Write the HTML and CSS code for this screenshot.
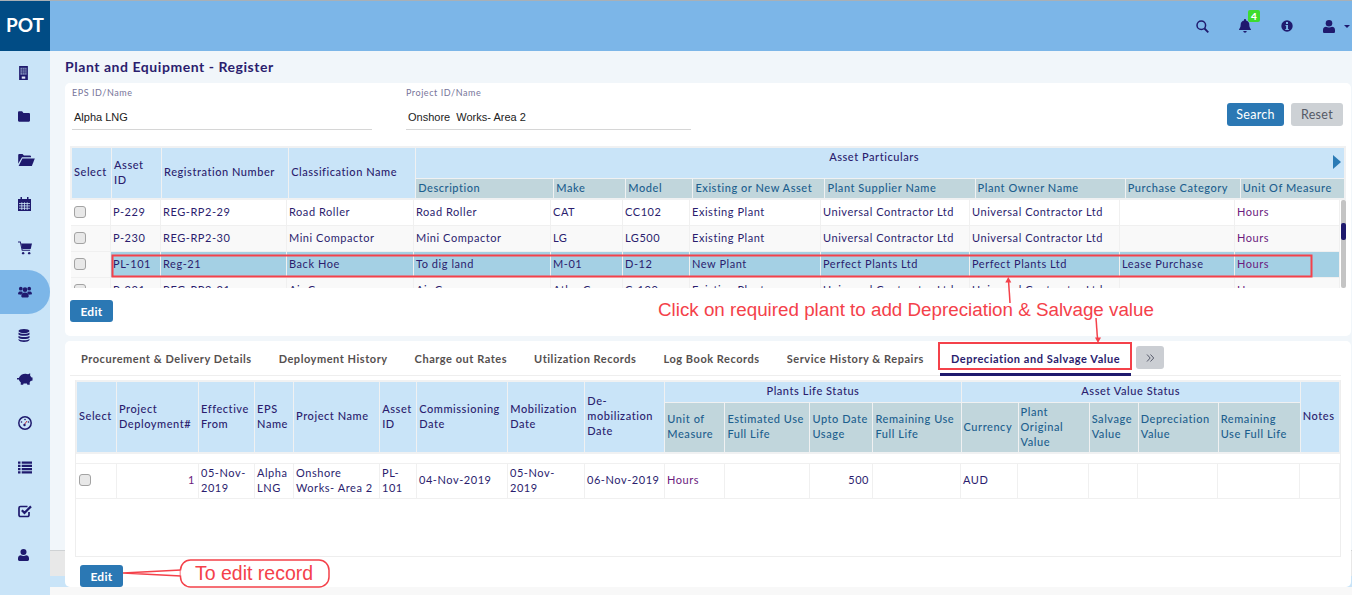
FILE: index.html
```html
<!DOCTYPE html>
<html lang="en">
    <head>
        <title>Plant and Equipment - Register</title>
        <meta name="viewport" content="width=device-width, initial-scale=1">
        <link rel="stylesheet" href="styles.css">
    </head>
    <body>
        <svg class="sprite" xmlns="http://www.w3.org/2000/svg">
            <symbol id="i-building" viewBox="0 0 12 16"><rect x="1" y="0" width="10" height="16" fill="#1f1a6e"/><path d="M2.5 2h7v8h-7z" fill="#7d8bb8"/><path d="M2.5 4.5h7M2.5 7h7M5 2v8M7.5 2v8" stroke="#1f1a6e" stroke-width=".6"/><rect x="4" y="12" width="4" height="2.5" fill="#dfe8f6"/></symbol>
            <symbol id="i-folder" viewBox="0 0 14 12"><path d="M1.200 0h3.600l1.500 1.800h6.500a1.200 1.200 0 0 1 1.200 1.200v7.800a1.200 1.200 0 0 1-1.200 1.200h-11.600a1.200 1.200 0 0 1-1.200-1.200v-9.600a1.200 1.200 0 0 1 1.200-1.200z" fill="#1f1a6e"/></symbol>
            <symbol id="i-open" viewBox="0 0 18 13"><path d="M0 10.500v-9.300a1.200 1.200 0 0 1 1.200-1.200h3.500l1.500 1.500h6.500a1.200 1.200 0 0 1 1.200 1.200v.8h-9.800z" fill="#1f1a6e"/><path d="M4.500 4.800h13.500l-3.200 8.200h-14.300z" fill="#1f1a6e"/></symbol>
            <symbol id="i-calendar" viewBox="0 0 13 14"><path d="M0 2h13v12h-13z" fill="#1f1a6e"/><path d="M2.500 0h1.500v2.500h-1.500zM9 0h1.500v2.500h-1.500z" fill="#1f1a6e"/><path d="M1 6.500h11M1 8.900h11M1 11.300h11M3.800 5.300v7.700M6.500 5.300v7.700M9.200 5.300v7.700" stroke="#c9e4f8" stroke-width=".8"/></symbol>
            <symbol id="i-cart" viewBox="0 0 15 14"><path d="M0 .5h2.500l2 9h8.500" fill="none" stroke="#1f1a6e" stroke-width="1.100"/><path d="M3.300 2.200h11.700l-1.400 5.800h-9z" fill="#1f1a6e"/><circle cx="5.500" cy="12.500" r="1.300" fill="#1f1a6e"/><circle cx="12" cy="12.500" r="1.300" fill="#1f1a6e"/></symbol>
            <symbol id="i-users" viewBox="0 0 15 12"><circle cx="3" cy="2.500" r="2" fill="#1f1a6e"/><circle cx="12" cy="2.500" r="2" fill="#1f1a6e"/><circle cx="7.500" cy="3.500" r="2.500" fill="#1f1a6e"/><path d="M0 8.500c0-2.500 1-3 3-3s2 .5 2 1l-1.500 2.500zM15 8.500c0-2.500-1-3-3-3s-2 .5-2 1l1.500 2.500z" fill="#1f1a6e"/><path d="M3.500 10.500c0-3 1.500-4 4-4s4 1 4 4c0 1-1 1.500-1.500 1.500h-5c-.5 0-1.500-.5-1.500-1.500z" fill="#1f1a6e"/></symbol>
            <symbol id="i-database" viewBox="0 0 12 13"><ellipse cx="6" cy="2" rx="5.500" ry="2" fill="#1f1a6e"/><path d="M.5 3.500c1 1.700 10 1.700 11 0v2c-1 1.700-10 1.700-11 0zM.5 6.700c1 1.700 10 1.700 11 0v2c-1 1.700-10 1.700-11 0zM.5 9.900c1 1.700 10 1.700 11 0v1.100c-1 2.600-10 2.600-11 0z" fill="#1f1a6e"/></symbol>
            <symbol id="i-piggy" viewBox="0 0 17 12"><path d="M0 5h2c1-3 4-4.500 7-4.500 1 0 2 .2 2.800.5l2.200-1v2.500l1.500 2h1v3l-2 .5-1 1.500v2.500h-2.500l-.5-1.200h-3.500l-.5 1.200h-2.500v-2.500c-1-.7-1.800-2-2-3h-2z" fill="#1f1a6e"/></symbol>
            <symbol id="i-gauge" viewBox="0 0 14 14"><circle cx="7" cy="7" r="6.200" fill="none" stroke="#1f1a6e" stroke-width="1.500"/><circle cx="7" cy="3.500" r=".8" fill="#1f1a6e"/><circle cx="3.500" cy="6" r=".8" fill="#1f1a6e"/><circle cx="10.500" cy="6" r=".8" fill="#1f1a6e"/><path d="M6 9l3-4" stroke="#c0303a" stroke-width="1"/><circle cx="6.500" cy="9" r="1.200" fill="#1f1a6e"/></symbol>
            <symbol id="i-list" viewBox="0 0 14 12"><path d="M0 0h2.500v2.300h-2.500zM0 3.200h2.500v2.300h-2.500zM0 6.500h2.500v2.300h-2.500zM0 9.700h2.500v2.300h-2.500zM3.700 0h10.300v2.300h-10.300zM3.700 3.200h10.300v2.300h-10.300zM3.700 6.500h10.300v2.300h-10.300zM3.700 9.700h10.300v2.300h-10.300z" fill="#1f1a6e"/></symbol>
            <symbol id="i-check" viewBox="0 0 14 14"><path d="M11 8v3a1.500 1.500 0 0 1-1.500 1.500h-7a1.500 1.500 0 0 1-1.500-1.500v-7a1.500 1.500 0 0 1 1.500-1.500h7" fill="none" stroke="#1f1a6e" stroke-width="1.700"/><path d="M3.800 6.200l2.700 2.700 6.500-6.500" fill="none" stroke="#1f1a6e" stroke-width="2.200"/></symbol>
            <symbol id="i-user" viewBox="0 0 12 13"><circle cx="6" cy="3.300" r="3.300" fill="#1f1a6e"/><path d="M0 11.500v-1.500c0-2 1.500-3.200 3-3.200 1 .5 2 .7 3 .7s2-.2 3-.7c1.500 0 3 1.200 3 3.200v1.500c0 1-.6 1.500-1.500 1.500h-9c-.9 0-1.500-.5-1.500-1.500z" fill="#1f1a6e"/></symbol>
        </svg>

        <div class="shell">
            <aside class="sidebar">
                <div class="logo">POT</div>
                <nav class="side-nav">
                    <a class="side-item"><svg width="11" height="14"><use href="#i-building"/></svg></a>
                    <a class="side-item"><svg width="12" height="11"><use href="#i-folder"/></svg></a>
                    <a class="side-item"><svg width="17" height="12"><use href="#i-open"/></svg></a>
                    <a class="side-item"><svg width="13" height="14"><use href="#i-calendar"/></svg></a>
                    <a class="side-item"><svg width="14" height="14"><use href="#i-cart"/></svg></a>
                    <a class="side-item active"><svg width="14" height="12"><use href="#i-users"/></svg></a>
                    <a class="side-item"><svg width="12" height="13"><use href="#i-database"/></svg></a>
                    <a class="side-item piggy"><svg width="16" height="12"><use href="#i-piggy"/></svg></a>
                    <a class="side-item"><svg width="14" height="14"><use href="#i-gauge"/></svg></a>
                    <a class="side-item"><svg width="14" height="13"><use href="#i-list"/></svg></a>
                    <a class="side-item"><svg width="14" height="14"><use href="#i-check"/></svg></a>
                    <a class="side-item"><svg width="11" height="12"><use href="#i-user"/></svg></a>
                </nav>
            </aside>

            <div class="page">
                <header class="topbar">
                    <a class="top-icon"><svg width="13" height="13" viewBox="0 0 13 13"><circle cx="5.300" cy="5.300" r="4.300" fill="none" stroke="#1f1a6e" stroke-width="1.500"/><path d="M8.500 8.500l3.800 3.800" stroke="#1f1a6e" stroke-width="1.800"/></svg></a>
                    <a class="top-icon bell"><svg width="12" height="14" viewBox="0 0 12 14"><path d="M6 0c.6 0 1 .4 1 1v.6c2 .4 3.300 2 3.300 4 0 3.400 1.700 4.400 1.700 5.400h-12c0-1 1.700-2 1.700-5.400 0-2 1.300-3.600 3.300-4v-.6c0-.6.400-1 1-1z" fill="#1f1a6e"/><path d="M4.300 12h3.400c0 1-.8 1.700-1.700 1.700s-1.700-.7-1.700-1.700z" fill="#1f1a6e"/></svg><span class="badge">4</span></a>
                    <a class="top-icon"><svg width="12" height="12" viewBox="0 0 12 12"><circle cx="6" cy="6" r="5.700" fill="#1f1a6e"/><rect x="5" y="2" width="2" height="2" fill="#7cb6e8"/><path d="M4.500 5h2.500v4h.8v1h-3.500v-1h.8v-3h-.6z" fill="#7cb6e8"/></svg></a>
                    <a class="top-icon user"><svg width="12" height="13"><use href="#i-user"/></svg><span class="caret"></span></a>
                </header>

                <main class="content">
                    <h1 class="page-title">Plant and Equipment - Register</h1>

                    <section class="card register">
                        <div class="filters">
                            <div class="field eps">
                                <label>EPS ID/Name</label>
                                <div class="field-value">Alpha LNG</div>
                            </div>
                            <div class="field project">
                                <label>Project ID/Name</label>
                                <div class="field-value">Onshore&nbsp; Works- Area 2</div>
                            </div>
                            <div class="filter-actions">
                                <button class="btn primary">Search</button>
                                <button class="btn muted">Reset</button>
                            </div>
                        </div>

                        <div class="grid-head">
                            <table class="head-table reg-head">
                                <colgroup>
                                    <col style="width:39px"><col style="width:49px"><col style="width:126px"><col style="width:126px"><col style="width:137px"><col style="width:71px"><col style="width:66px"><col style="width:131px"><col style="width:149px"><col style="width:149px"><col style="width:114px"><col style="width:103px">
                                </colgroup>
                                <tr>
                                    <th rowspan="2">Select</th>
                                    <th rowspan="2">Asset<br>ID</th>
                                    <th rowspan="2">Registration Number</th>
                                    <th rowspan="2">Classification Name</th>
                                    <th colspan="8" class="group upper">Asset Particulars<span class="scroll-arrow"></span></th>
                                </tr>
                                <tr class="sub">
                                    <th>Description</th><th>Make</th><th>Model</th><th>Existing or New Asset</th><th>Plant Supplier Name</th><th>Plant Owner Name</th><th>Purchase Category</th><th>Unit Of Measure</th>
                                </tr>
                            </table>
                        </div>

                        <div class="grid-scroll">
                            <div class="grid-clip">
                                <table class="body-table reg-body">
                                    <colgroup>
                                        <col style="width:40px"><col style="width:50px"><col style="width:126px"><col style="width:127px"><col style="width:137px"><col style="width:72px"><col style="width:67px"><col style="width:131px"><col style="width:149px"><col style="width:150px"><col style="width:115px"><col style="width:105px">
                                    </colgroup>
                                    <tr>
                                        <td><input type="checkbox" class="check"></td><td>P-229</td><td>REG-RP2-29</td><td>Road Roller</td><td>Road Roller</td><td>CAT</td><td>CC102</td><td>Existing Plant</td><td>Universal Contractor Ltd</td><td>Universal Contractor Ltd</td><td></td><td class="unit">Hours</td>
                                    </tr>
                                    <tr>
                                        <td><input type="checkbox" class="check"></td><td>P-230</td><td>REG-RP2-30</td><td>Mini Compactor</td><td>Mini Compactor</td><td>LG</td><td>LG500</td><td>Existing Plant</td><td>Universal Contractor Ltd</td><td>Universal Contractor Ltd</td><td></td><td class="unit">Hours</td>
                                    </tr>
                                    <tr class="picked">
                                        <td><input type="checkbox" class="check"></td><td>PL-101</td><td>Reg-21</td><td>Back Hoe</td><td>To dig land</td><td>M-01</td><td>D-12</td><td>New Plant</td><td>Perfect Plants Ltd</td><td>Perfect Plants Ltd</td><td>Lease Purchase</td><td class="unit">Hours</td>
                                    </tr>
                                    <tr>
                                        <td><input type="checkbox" class="check"></td><td>P-231</td><td>REG-RP2-31</td><td>Air Compressor</td><td>Air Compressor</td><td>Atlas Copco</td><td>C-100</td><td>Existing Plant</td><td>Universal Contractor Ltd</td><td>Universal Contractor Ltd</td><td></td><td class="unit">Hours</td>
                                    </tr>
                                </table>
                            </div>
                            <div class="scrollbar"><div class="scroll-thumb"></div></div>
                        </div>

                        <button class="btn primary edit">Edit</button>
                    </section>

                    <section class="card detail">
                        <div class="tabs">
                            <a class="tab">Procurement &amp; Delivery Details</a>
                            <a class="tab">Deployment History</a>
                            <a class="tab">Charge out Rates</a>
                            <a class="tab">Utilization Records</a>
                            <a class="tab">Log Book Records</a>
                            <a class="tab">Service History &amp; Repairs</a>
                            <a class="tab active">Depreciation and Salvage Value</a>
                            <button class="tab-more"><svg width="9" height="8" viewBox="0 0 9 8"><path d="M1 .5l3.200 3.500-3.200 3.500M4.500 .5l3.200 3.500-3.200 3.500" fill="none" stroke="#55596a" stroke-width="1"/></svg></button>
                        </div>

                        <div class="detail-frame">
                            <div class="grid-head dep-wrap">
                                <table class="head-table dep-head">
                                    <colgroup>
                                        <col style="width:39px"><col style="width:81px"><col style="width:55px"><col style="width:38px"><col style="width:85px"><col style="width:36px"><col style="width:90px"><col style="width:76px"><col style="width:79px"><col style="width:59px"><col style="width:84px"><col style="width:62px"><col style="width:87px"><col style="width:56px"><col style="width:70px"><col style="width:48px"><col style="width:79px"><col style="width:81px"><col style="width:38px">
                                    </colgroup>
                                    <tr>
                                        <th rowspan="2">Select</th>
                                        <th rowspan="2">Project Deployment#</th>
                                        <th rowspan="2">Effective From</th>
                                        <th rowspan="2">EPS Name</th>
                                        <th rowspan="2">Project Name</th>
                                        <th rowspan="2">Asset ID</th>
                                        <th rowspan="2">Commissioning Date</th>
                                        <th rowspan="2">Mobilization Date</th>
                                        <th rowspan="2">De-mobilization Date</th>
                                        <th colspan="4" class="group">Plants Life Status</th>
                                        <th colspan="5" class="group">Asset Value Status</th>
                                        <th rowspan="2" class="notes">Notes</th>
                                    </tr>
                                    <tr class="sub">
                                        <th>Unit of Measure</th><th>Estimated Use Full Life</th><th>Upto Date Usage</th><th>Remaining Use Full Life</th><th>Currency</th><th>Plant Original Value</th><th>Salvage Value</th><th>Depreciation Value</th><th>Remaining Use Full Life</th>
                                    </tr>
                                </table>
                            </div>
                            <table class="body-table dep-body">
                                <colgroup>
                                    <col style="width:41px"><col style="width:82px"><col style="width:56px"><col style="width:39px"><col style="width:86px"><col style="width:37px"><col style="width:91px"><col style="width:77px"><col style="width:80px"><col style="width:60px"><col style="width:85px"><col style="width:63px"><col style="width:88px"><col style="width:57px"><col style="width:71px"><col style="width:49px"><col style="width:80px"><col style="width:82px"><col style="width:40px">
                                </colgroup>
                                <tr>
                                    <td><input type="checkbox" class="check"></td><td class="num unit">1</td><td>05-Nov-2019</td><td>Alpha LNG</td><td>Onshore Works- Area 2</td><td>PL-101</td><td>04-Nov-2019</td><td>05-Nov-<br>2019</td><td>06-Nov-2019</td><td class="unit">Hours</td><td></td><td class="num">500</td><td></td><td>AUD</td><td></td><td></td><td></td><td></td><td></td>
                                </tr>
                            </table>
                        </div>

                        <button class="btn primary edit">Edit</button>
                    </section>
                </main>
                <div class="page-foot"></div>
            </div>
        </div>

        <!-- tutorial markup drawn over the screenshot -->
        <svg class="markup" width="1352" height="595" viewBox="0 0 1352 595" xmlns="http://www.w3.org/2000/svg">
            <rect x="112.500" y="255.500" width="1199" height="21" fill="none" stroke="#f4414a" stroke-width="2"/>
            <rect x="939" y="343" width="192" height="26" fill="none" stroke="#f4414a" stroke-width="2"/>
            <path d="M1010 303l-1.500-23" stroke="#f4414a" stroke-width="1.500" fill="none"/>
            <path d="M1008.300 277l-3 5.500h6z" fill="#f4414a"/>
            <path d="M1096 318l1.500 21" stroke="#f4414a" stroke-width="1.500" fill="none"/>
            <path d="M1098 343l3-5.500h-6z" fill="#f4414a"/>
            <path d="M181 570l-58 3 58 3" fill="#fff" stroke="#f4414a" stroke-width="1.500"/>
            <rect x="180.500" y="560" width="148.500" height="27" rx="10" fill="#fff" stroke="#f4414a" stroke-width="1.500"/>
            <path d="M181.500 570.500v5" stroke="#fff" stroke-width="2"/>
        </svg>
        <div class="note note-plant">Click on required plant to add Depreciation &amp; Salvage value</div>
        <div class="note note-edit">To edit record</div>
    </body>
</html>
```

FILE: styles.css
```css
:root {
    --navy: #1f1a6e;
    --text: #2b1d6e;
    --purple: #6b1a7e;
    --blue-head: #c9e4f8;
    --blue-sub: #c1d6dc;
    --blue-sub-text: #1d5f8e;
    --blue-top: #7cb6e8;
    --blue-logo: #014c85;
    --picked: #a4d0e4;
    --line: #f0f0f0;
    --red: #f4414a;
}
* { box-sizing: border-box; }
html, body { margin: 0; height: 100%; overflow: hidden; }
body { font-family: Lato, "Open Sans", sans-serif; font-size: 11px; color: var(--text); letter-spacing: 0.55px; background: #f8f8f8; }
.sprite { display: none; }
.shell { display: flex; height: 595px; }

/* sidebar */
.sidebar { width: 50px; flex: none; background: var(--blue-head); display: flex; flex-direction: column; }
.logo { height: 51px; flex: none; background: var(--blue-logo); border-top: 1px solid #a9b0b6; padding-bottom: 3px; color: #fff; font-size: 19px; font-weight: 700; letter-spacing: 0; display: flex; align-items: center; justify-content: center; }
.side-nav { display: flex; flex-direction: column; }
.side-item { height: 43.8px; display: flex; align-items: center; padding-left: 18px; }
.side-item.piggy { padding-left: 17px; }
.side-item.active { background: var(--blue-top); border-radius: 0 22px 22px 0; }

/* top bar */
.page { flex: 1; min-width: 0; display: flex; flex-direction: column; }
.topbar { height: 51px; flex: none; background: var(--blue-top); border-top: 1px solid #a9b0b6; display: flex; align-items: center; justify-content: flex-end; padding-right: 2px; }
.top-icon { position: relative; display: flex; align-items: center; margin-left: 30px; height: 16px; }
.top-icon.user { gap: 9px; }
.badge { position: absolute; left: 9px; top: -8px; width: 12px; height: 12px; border-radius: 2px; background: #3ddc2e; color: #fff; font-size: 10px; font-weight: 900; letter-spacing: 0; line-height: 12px; text-align: center; }
.caret { width: 0; height: 0; border-left: 3.500px solid transparent; border-right: 3.500px solid transparent; border-top: 3.500px solid var(--navy); }

/* content */
.content { flex: 1; display: flex; flex-direction: column; padding-left: 15px; padding-right: 1px; background: linear-gradient(#f1f6fa 0, #f1f6fa 499px, #cfd2d4 499px, #cfd2d4 500px, #e8e8e8 500px, #e8e8e8 525px, #c9e4f8 525px); }
.page-title { margin: 0; height: 32px; font-size: 14px; line-height: 32px; font-weight: 700; color: var(--text); letter-spacing: 0.55px; }
.card { background: #fff; border-radius: 5px; }
.register { height: 253px; padding: 0 5px; }
.detail { height: 246px; margin-top: 5px; padding: 0 10px 0 5px; }
.page-foot { height: 8px; flex: none; background: #f8f8f8; }

/* filters */
.filters { height: 63px; display: flex; padding: 4px 3px 0 2px; }
.field label { display: block; height: 12px; font-size: 9px; line-height: 12px; color: #77759a; }
.field-value { height: 31px; padding: 11px 2px 0; border-bottom: 1px solid #d6d6d6; font-family: "Liberation Sans", Arial, sans-serif; font-size: 11px; letter-spacing: 0; color: #222; line-height: 14px; }
.eps { width: 300px; }
.project { width: 285px; margin-left: 34px; }
.filter-actions { margin-left: auto; display: flex; gap: 7px; padding-top: 16px; }
.btn { height: 23px; border: none; border-radius: 3px; font-family: inherit; font-size: 12.500px; letter-spacing: 0.3px; padding: 0; }
.btn.primary { background: #2b78b4; color: #fff; width: 57px; }
.btn.muted { background: #cdd1d5; color: #555a66; width: 52px; }
.btn.edit { width: 43px; height: 22px; display: block; font-weight: 700; font-size: 12px; }
.register .edit { margin-top: 12px; }
.detail .edit { margin: 8px 0 0 10px; }

/* grid headers */
.grid-head { background: #f0f1f2; padding: 1px; }
.head-table { border-collapse: separate; border-spacing: 1px; table-layout: fixed; width: 100%; }
.head-table th { background: var(--blue-head); color: var(--text); font-size: 11px; font-weight: 500; text-align: left; padding: 0 2px 3px; line-height: 15px; }
.head-table tr.sub th { background: var(--blue-sub); color: var(--blue-sub-text); padding-bottom: 2px; }
.head-table th.group { text-align: center; }
.reg-head tr:first-child th.group { height: 30px; }
.reg-head tr.sub th { height: 19px; }
.head-table th.upper { position: relative; padding: 0 12px 14px 0; }
.scroll-arrow { position: absolute; right: 3px; top: 7px; width: 0; height: 0; border-left: 8px solid #2a7ab5; border-top: 7.500px solid transparent; border-bottom: 7.500px solid transparent; }
.dep-wrap { padding: 1px 0; }
.dep-head tr:first-child th.group { height: 20px; }
.dep-head tr.sub th { height: 49px; padding-bottom: 3px; }
.head-table th.notes { padding-bottom: 4px; }

/* grid bodies */
.grid-scroll { display: flex; height: 88px; padding-left: 1px; }
.grid-clip { flex: 1; min-width: 0; height: 88px; overflow: hidden; }
.scrollbar { width: 5px; margin-left: 1px; background: #c4c4c4; border-radius: 2px; }
.scroll-thumb { height: 17px; margin-top: 23px; background: var(--navy); border-radius: 2px; }
.body-table { border-collapse: separate; border-spacing: 0; table-layout: fixed; width: 1269px; }
.body-table td { height: 26px; padding: 0 2px 2px; border-right: 1px solid var(--line); border-bottom: 1px solid var(--line); line-height: 15px; vertical-align: middle; }
.reg-body tr:nth-child(even) td { background: #f9f9f9; }
.reg-body tr.picked td { background: var(--picked); }
.reg-body tr.picked td:first-child { background: #f9f9f9; }
.unit { color: var(--purple); }
.body-table td.num { text-align: right; padding-right: 3px; }
.check { appearance: none; display: block; width: 12px; height: 12px; margin: 0 0 0 1px; border: 1px solid #a3a3a3; border-radius: 3px; background: #e8e8e8; }

/* tabs */
.tabs { height: 35px; display: flex; align-items: stretch; gap: 5px; border-bottom: 1px solid #eeeeee; margin-bottom: 4px; }
.tab { padding: 0 11px; line-height: 35px; font-size: 11px; font-weight: 700; letter-spacing: 0.535px; color: #55504f; white-space: nowrap; }
.tab.active { color: var(--text); border-bottom: 3px solid var(--navy); height: 35px; }
.tab-more { width: 28px; height: 23px; margin-top: 5px; border: none; border-radius: 3px; background: #cbced3; padding: 0; display: flex; align-items: center; justify-content: center; }

/* detail table */
.detail-frame { margin-left: 5px; height: 177px; border: 1px solid #eeeeee; border-top: none; }
.dep-body { width: 1264px; margin-top: 9px; border-top: 1px solid var(--line); }
.dep-body td { height: 35px; padding-bottom: 3px; }

/* tutorial markup */
.markup { position: absolute; left: 0; top: 0; pointer-events: none; }
.note { position: absolute; font-family: "Liberation Sans", Arial, sans-serif; font-size: 18.800px; letter-spacing: 0; color: var(--red); white-space: nowrap; line-height: 22px; }
.note-plant { left: 658px; top: 299px; }
.note-edit { left: 195px; top: 562px; font-size: 19.500px; }
```
